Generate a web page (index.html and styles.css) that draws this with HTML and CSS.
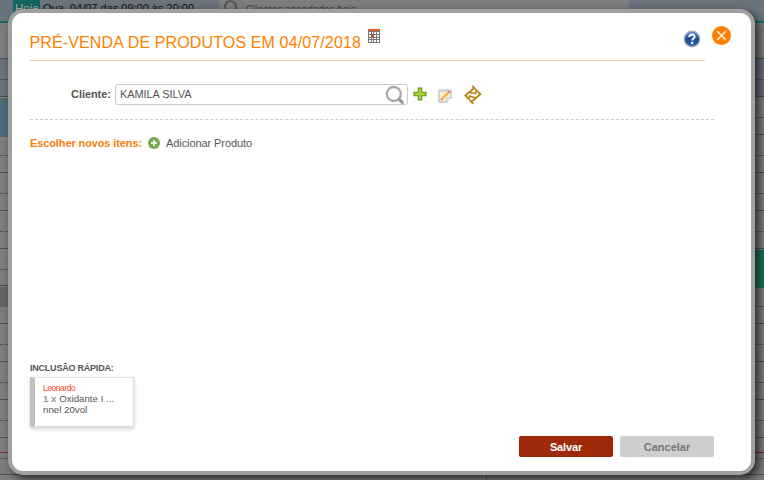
FILE: index.html
```html
<!DOCTYPE html>
<html lang="pt-BR">
<head>
<meta charset="utf-8">
<title>Pré-venda de produtos</title>
<link rel="stylesheet" href="styles.css">
</head>
<body>
<div class="agenda">
  <header class="agenda-bar">
    <span class="today">Hoje</span><span class="hours">Qua, 04/07 das 09:00 às 20:00</span>
    <div class="agenda-search">
      <svg class="bar-lens" viewBox="0 0 20 20"><circle cx="9" cy="7" r="5.8"/><path d="M13 11l5 5"/></svg>
      <span>Clientes agendados hoje</span>
    </div>
  </header>
  <div class="agenda-head"></div>
  <div class="slots">
    <div class="slot early"></div><div class="slot"></div><div class="slot"></div><div class="slot"></div><div class="slot"></div><div class="slot"></div><div class="slot"></div><div class="slot"></div><div class="slot"></div><div class="slot"></div><div class="slot"></div><div class="slot"></div>
  </div>
  <div class="event event-blue"></div>
  <div class="event event-gray"></div>
  <div class="event event-green"></div>
  <div class="now-line"></div>
  <div class="column-line"></div>
</div>

<main class="modal">
  <div class="title-row">
    <div class="title-box">
      <h1>PRÉ-VENDA DE PRODUTOS EM 04/07/2018</h1>
      <svg class="calendar" viewBox="0 0 12 14"><path fill="#777" d="M0 0h12v14H0z"/><path fill="#e65b24" d="M0 0h12v2H0z"/><path fill="#fff" d="M1 3h2v2H1zm3 0h1v2H4zm2 0h2v2H6zm3 0h2v2H9zM1 6h2v2H1zm5 0h2v2H6zm3 0h2v2H9zM1 9h2v1H1zm3 0h1v1H4zm2 0h2v1H6zm3 0h2v1H9zM1 11h2v2H1zm3 0h1v2H4zm2 0h2v2H6zm3 0h2v2H9z"/><path fill="#c64a24" d="M3 5h3v3H3z"/></svg>
      <svg class="help" viewBox="0 0 18 18"><defs><linearGradient id="helpFill" x2="0" y2="1"><stop stop-color="#6a8fc4"/><stop offset=".5" stop-color="#204c91"/><stop offset="1" stop-color="#3565aa"/></linearGradient></defs><circle cx="9" cy="9" r="7.8" fill="url(#helpFill)" stroke="#a9b4c3" stroke-width="1.2"/><path d="M6.4 7c0-3.4 5.3-3.2 5.2-.3 0 1.8-2.3 1.9-2.3 3.8" fill="none" stroke="#fff" stroke-width="1.9"/><circle cx="9.2" cy="13" r="1.2" fill="#fff"/></svg>
    </div>
    <svg class="close" viewBox="0 0 19 19"><circle cx="9.5" cy="9.5" r="9.5" fill="#ff8000"/><path d="M5.3 5.3l8.4 8.4m0-8.4l-8.4 8.4" stroke="#fff" stroke-width="1.3"/></svg>
  </div>

  <div class="client-row">
    <label>Cliente:</label>
    <div class="client-field"><span>KAMILA SILVA</span>
      <svg class="lens" viewBox="0 0 20 20"><circle cx="8.8" cy="9" r="7" fill="none" stroke="#aaa" stroke-width="2.3"/><path d="M14.3 14.3l3 3.2" stroke="#999" stroke-width="3.2" stroke-linecap="round"/></svg>
    </div>
    <svg class="add" viewBox="0 0 14 14"><path d="M5.3 1h3.4v4.3H13v3.4H8.7V13H5.3V8.7H1V5.3h4.3z" fill="#a6d232" stroke="#60961a" stroke-width="1.1"/></svg>
    <svg class="note" viewBox="0 0 14 14"><path d="M1 1h12v8l-4 4H1z" fill="#fff0cf" stroke="#a6adbb"/><path d="M1 1.2h12v2H1z" fill="#cfd4de"/><path d="M9 13V9h4" fill="#fff" stroke="#a6adbb" stroke-width=".8"/><path d="M4 10l7-7" stroke="#f5ad3b" stroke-width="2"/><path d="M10.4 3.6l1.2-1.2" stroke="#e36a4c" stroke-width="2"/><path d="M3 11l1.2-1.2" stroke="#c66" stroke-width="1.5"/></svg>
    <svg class="ticket" viewBox="0 0 18 20"><g fill="none" stroke="#ba8412" stroke-width="1.9"><path d="M8.3.9l1.9 2.1-8.8 7.6 2.2 2.2"/><path d="M9.2 19l-1.9-2.2 9-7.7-2.2-2.2"/><path d="M5.4 7.5l6.1 1.1 1-3.2M3.6 12.8l3.7 4M10.2 3l3.9 3.9M5 14.3l.4-3.3 6.5 1.9" stroke-width="1.6"/></g></svg>
  </div>

  <div class="items-row">
    <strong>Escolher novos itens:</strong>
    <svg class="plus-circle" viewBox="0 0 12 12"><circle cx="6" cy="6" r="6" fill="#78a94e"/><path d="M6 3v6M3 6h6" stroke="#e9f4df" stroke-width="1.8"/></svg>
    <span>Adicionar Produto</span>
  </div>

  <section class="quick">
    <h2>INCLUSÃO RÁPIDA:</h2>
    <div class="quick-card">
      <div class="seller">Leonardo</div>
      <div><b>1 x</b> Oxidante I ...</div>
      <div>nnel 20vol</div>
    </div>
  </section>

  <footer class="actions">
    <button class="save">Salvar</button>
    <button class="cancel">Cancelar</button>
  </footer>
</main>
</body>
</html>
```
FILE: styles.css
```css
* { box-sizing: border-box; }
body {
  margin: 0;
  width: 764px;
  height: 480px;
  overflow: hidden;
  position: relative;
  font-family: "Liberation Sans", Arial, sans-serif;
  font-size: 11px;
  color: #555;
}
svg { display: block; flex: none; }

.agenda { position: relative; height: 480px; overflow: hidden; background: #7d7d7d; }
.agenda-bar {
  display: flex;
  height: 23px;
  padding-left: 13px;
  background: #6b737d;
  border-bottom: 2px solid #116b64;
  color: #111;
  line-height: 17px;
}
.today { width: 27px; height: 17px; padding-left: 2px; background: #12665f; color: #aaa; font-size: 11.5px; }
.hours { width: 179px; padding-left: 3px; font-size: 11px; white-space: nowrap; }
.agenda-search {
  display: flex;
  width: 410px;
  height: 17px;
  padding-left: 3px;
  background: #7c7e80;
  color: #444;
  line-height: 19px;
}
.agenda-search span { margin-left: 5px; font-size: 10px; }
.bar-lens { width: 19px; height: 19px; fill: none; stroke: #505050; stroke-width: 2; }
.agenda-head { height: 36px; background: #7d7d7d; border-bottom: 1px solid #505050; }
.slots {
  display: grid;
  grid-template-rows: repeat(5, 38px) 37px repeat(4, 38px) 37px 38px;
}
.slot { display: flex; flex-direction: column; border-bottom: 1px solid #505050; }
.slot::before { content: ""; height: 20px; border-bottom: 1px dotted #484848; }
.early { background: #68717c; }
.event { position: absolute; }
.event-blue { left: 0; top: 98px; width: 8px; height: 39px; background: #506b76; }
.event-gray { left: 0; top: 287px; width: 8px; height: 20px; background: #646464; }
.event-green { left: 755px; top: 250px; width: 9px; height: 38px; background: #177560; }
.now-line { position: absolute; left: 0; top: 452px; width: 764px; height: 1px; background: #99202b; }
.column-line { position: absolute; left: 486px; top: 475px; width: 1px; height: 5px; background: #505050; }

.modal {
  position: absolute;
  left: 8px;
  top: 9px;
  width: 747px;
  height: 466px;
  display: flex;
  flex-direction: column;
  padding: 0 17px 0 18px;
  background: #fff;
  border: 4px solid #a0a0a0;
  border-radius: 15px;
  box-shadow: 4px 4px 10px rgba(0, 0, 0, .65);
}
.title-row { display: flex; height: 48px; margin-right: -1px; }
.title-box { display: flex; width: 675px; border-bottom: 1px solid #fac898; }
h1 {
  width: 338px;
  margin: 20px 0 0;
  font-size: 16px;
  font-weight: 400;
  line-height: 19px;
  letter-spacing: .13px;
  color: #ff7f00;
  white-space: nowrap;
  text-indent: -.5px;
}
.calendar { width: 12px; height: 14px; margin-top: 16px; }
.help { width: 18px; height: 18px; margin: 17px 4px 0 auto; }
.close { width: 19px; height: 19px; margin: 13px 0 0 7px; }

.client-row {
  display: flex;
  align-items: flex-start;
  width: 684px;
  height: 59px;
  padding: 23px 0 0 41px;
  border-bottom: 1px dashed #ccc;
}
.client-row label { width: 44px; font-weight: 700; line-height: 21px; letter-spacing: -.06px; }
.client-field {
  display: flex;
  align-items: center;
  justify-content: space-between;
  width: 293px;
  height: 21px;
  padding: 0 2px 0 4px;
  border: 1px solid #c8c8c8;
  border-radius: 3px;
  letter-spacing: -.08px;
}
.client-field span { line-height: 13px; margin-bottom: 1px; }
.lens { width: 20px; height: 20px; }
.add { width: 14px; height: 14px; margin: 3px 0 0 5px; }
.note { width: 14px; height: 14px; margin: 5px 0 0 11px; }
.ticket { width: 18px; height: 20px; margin: 1px 0 0 12px; }

.items-row { display: flex; align-items: center; height: 13px; margin-top: 16px; }
.items-row strong { width: 118px; color: #f97f0b; white-space: nowrap; letter-spacing: -.11px; }
.plus-circle { width: 12px; height: 12px; }
.items-row span { margin-left: 6px; letter-spacing: -.08px; }

.quick { margin-top: 214px; height: 66px; }
.quick h2 { margin: 0; font-size: 9px; line-height: 11px; letter-spacing: -.22px; }
.quick-card {
  width: 104px;
  height: 50px;
  margin-top: 3px;
  padding: 4px 0 0 8px;
  border: 1px solid #ddd;
  border-left: 5px solid #c0c0c0;
  box-shadow: 0 2px 4px rgba(0, 0, 0, .18);
  font-size: 9.7px;
  line-height: 11px;
}
.quick-card b { color: #999; }
.quick-card .seller { height: 11px; font-size: 8.5px; line-height: 12px; letter-spacing: -.45px; color: #fa4020; }
.actions { display: flex; justify-content: flex-end; gap: 7px; margin-top: 7px; padding-right: 20px; }
.actions button {
  width: 94px;
  height: 21px;
  padding: 0;
  border: 0;
  border-radius: 2px;
  font: bold 11px "Liberation Sans", Arial, sans-serif;
}
.save { background: #9e290a; color: #fff; letter-spacing: -.15px; }
.cancel { background: #cecece; color: #777; }
```
